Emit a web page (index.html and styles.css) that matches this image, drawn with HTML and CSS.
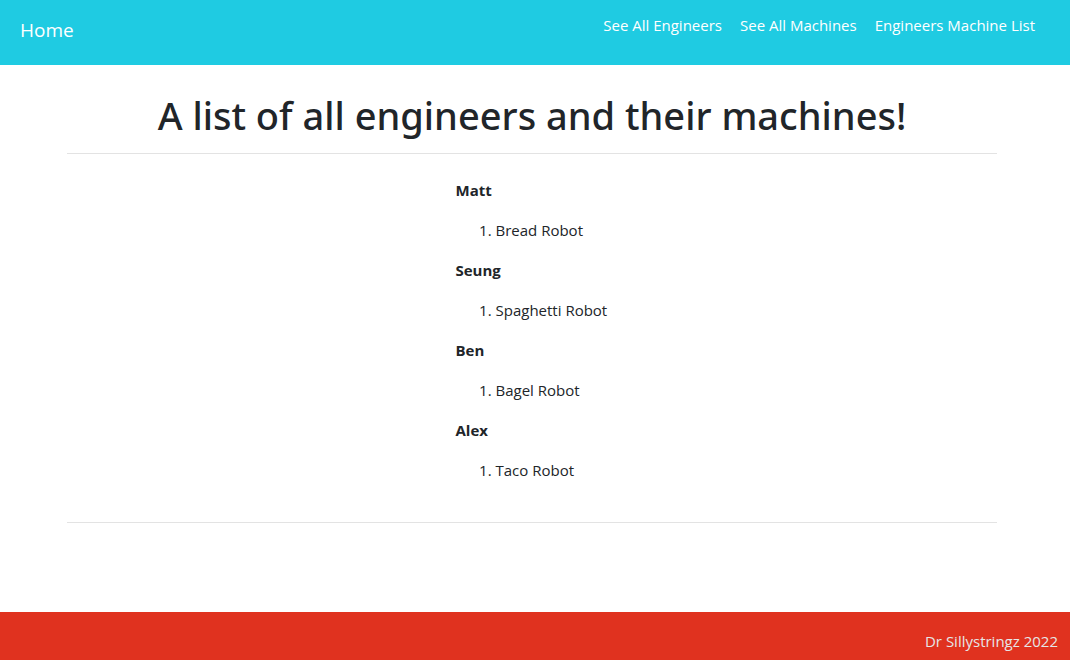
FILE: index.html
```html
<!DOCTYPE html>
<html lang="en">
<head>
<meta charset="utf-8">
<title>Engineers Machine List</title>
<link rel="stylesheet" href="styles.css">
</head>
<body>
<div class="page">
  <nav class="navbar">
    <a class="brand" href="#">Home</a>
    <div class="nav-links">
      <a href="#">See All Engineers</a>
      <a href="#">See All Machines</a>
      <a href="#">Engineers Machine List</a>
    </div>
  </nav>
  <main class="container">
    <h1 class="title">A list of all engineers and their machines!</h1>
    <hr class="rule">
    <div class="list-wrap">
      <div class="list">
        <p class="name">Matt</p>
        <ol class="machines"><li>Bread Robot</li></ol>
        <p class="name">Seung</p>
        <ol class="machines"><li>Spaghetti Robot</li></ol>
        <p class="name">Ben</p>
        <ol class="machines"><li>Bagel Robot</li></ol>
        <p class="name">Alex</p>
        <ol class="machines"><li>Taco Robot</li></ol>
      </div>
    </div>
    <hr class="rule">
  </main>
  <footer class="footer">Dr Sillystringz 2022</footer>
</div>
</body>
</html>
```
FILE: styles.css
```css
* { box-sizing: border-box; }
html, body { margin: 0; padding: 0; }
body {
  font-family: "Open Sans", "Noto Sans", sans-serif;
  font-size: 15px;
  line-height: 24px;
  color: #212529;
  background: #fff;
}
.page {
  min-height: 660px;
  display: flex;
  flex-direction: column;
}
.navbar {
  height: 65px;
  background: #1fcbe2;
  display: flex;
  justify-content: space-between;
  align-items: flex-start;
  padding: 0 35px 0 20px;
}
.brand {
  color: #fff;
  text-decoration: none;
  font-size: 19px;
  line-height: 30px;
  margin-top: 15px;
}
.nav-links {
  display: flex;
  gap: 18px;
  margin-top: 13px;
}
.nav-links a {
  color: #fff;
  text-decoration: none;
  font-size: 15px;
  line-height: 24px;
}
.container {
  width: 930px;
  margin: 0 0 0 67px;
  flex: 1;
}
.title {
  margin: 26px 0 0;
  font-family: "Noto Sans", "Open Sans", sans-serif;
  font-size: 38px;
  line-height: 48px;
  font-weight: 500;
  text-align: center;
}
.rule {
  margin: 0;
  border: 0;
  border-top: 1px solid #e3e3e3;
}
.title + .rule { margin-top: 14px; }
.list-wrap {
  display: flex;
  justify-content: center;
  padding: 24px 0 24px;
}
.list {
  width: 153px;
  white-space: nowrap;
}
.name {
  margin: 0 0 16px;
  font-weight: 700;
}
.machines {
  margin: 0 0 16px;
  padding-left: 40px;
}
.footer {
  height: 48px;
  background: #e0321f;
  color: #e6e6e6;
  text-align: right;
  padding: 0 12px;
  line-height: 58px;
  font-size: 15px;
}
```
